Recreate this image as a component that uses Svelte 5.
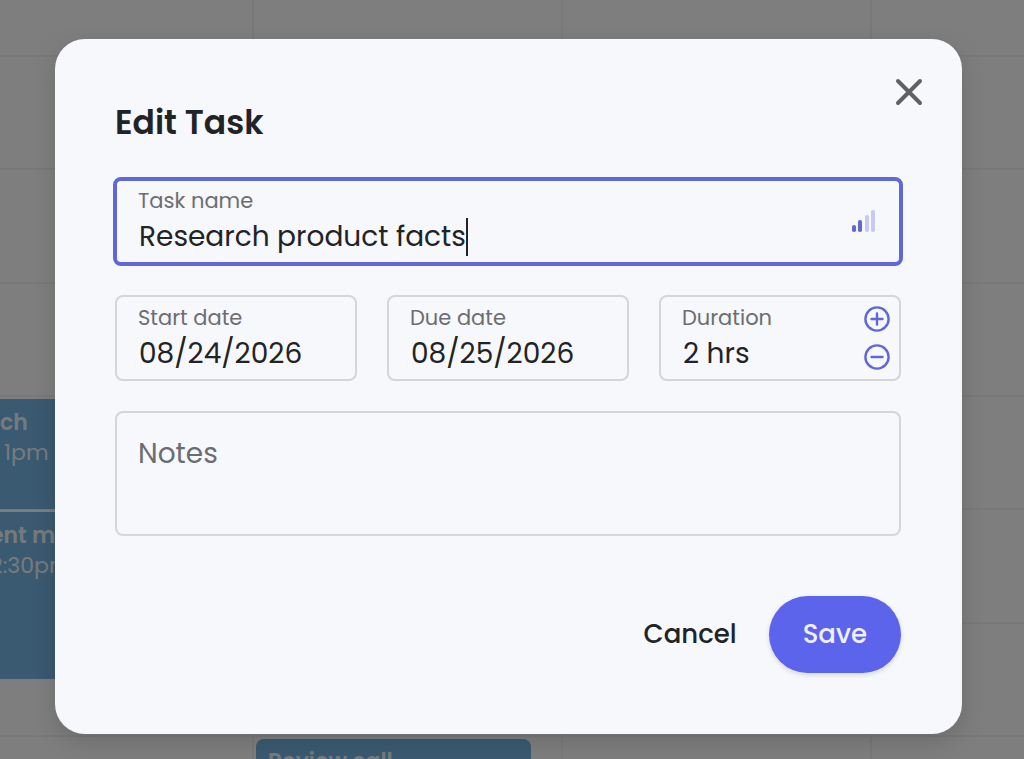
<script lang="ts">
  let taskName = $state('Research product facts');
  let startDate = $state('08/24/2026');
  let dueDate = $state('08/25/2026');
  let hours = $state(2);
  let notes = $state('');

  const cells = Array.from({ length: 32 });
  const effort = [
    { x: 1, y: 17, height: 7, active: true },
    { x: 7, y: 12, height: 12, active: true },
    { x: 14, y: 7, height: 17, active: false },
    { x: 20, y: 2, height: 22, active: false }
  ];

  function changeHours(step: number) {
    hours = Math.max(1, hours + step);
  }
</script>

<div class="page">
  <div class="calendar" aria-hidden="true">
    <div class="cells">
      {#each cells as _}
        <div class="cell"></div>
      {/each}
    </div>
    <div class="events">
      <div class="event lunch">
        <strong>ch</strong>
        <span>1pm</span>
      </div>
      <div class="event meeting">
        <strong>ent meeting</strong>
        <span>2:30pm</span>
      </div>
      <div class="event call">
        <strong>Review call</strong>
      </div>
    </div>
  </div>

  <div class="backdrop">
    <form class="dialog" role="dialog" aria-labelledby="dialog-title" onsubmit={(e) => e.preventDefault()}>
      <header>
        <h1 id="dialog-title">Edit Task</h1>
        <button type="button" class="close" aria-label="Close">
          <svg viewBox="0 0 32 32" width="32" height="32">
            <path d="M5 5 27 27M27 5 5 27" />
          </svg>
        </button>
      </header>

      <div class="field active">
        <div class="text">
          <label for="task-name">Task name</label>
          <div class="entry">
            <input id="task-name" class="name" bind:value={taskName} />
            <span class="caret"></span>
          </div>
        </div>
        <svg class="effort" viewBox="0 0 26 26" width="26" height="26">
          {#each effort as bar}
            <rect x={bar.x} y={bar.y} width="4" height={bar.height} rx="1.8" class:on={bar.active} />
          {/each}
        </svg>
      </div>

      <div class="row">
        <div class="field">
          <div class="text">
            <label for="start-date">Start date</label>
            <input id="start-date" bind:value={startDate} />
          </div>
        </div>
        <div class="field">
          <div class="text">
            <label for="due-date">Due date</label>
            <input id="due-date" bind:value={dueDate} />
          </div>
        </div>
        <div class="field">
          <div class="text">
            <label for="duration">Duration</label>
            <input id="duration" value="{hours} hrs" readonly />
          </div>
          <div class="stepper">
            <button type="button" aria-label="Increase duration" onclick={() => changeHours(1)}>
              <svg viewBox="0 0 26 26" width="26" height="26">
                <circle cx="13" cy="13" r="11.6" />
                <path d="M7.5 13h11M13 7.5v11" />
              </svg>
            </button>
            <button type="button" aria-label="Decrease duration" onclick={() => changeHours(-1)}>
              <svg viewBox="0 0 26 26" width="26" height="26">
                <circle cx="13" cy="13" r="11.6" />
                <path d="M7.5 13h11" />
              </svg>
            </button>
          </div>
        </div>
      </div>

      <textarea aria-label="Notes" placeholder="Notes" bind:value={notes}></textarea>

      <footer>
        <button type="button" class="cancel">Cancel</button>
        <button type="submit" class="save">Save</button>
      </footer>
    </form>
  </div>
</div>

<style>
  :global(body) {
    margin: 0;
  }

  .page {
    position: relative;
    min-height: 100vh;
    display: grid;
    overflow: hidden;
    font-family: Poppins, Inter, sans-serif;
    color: #222326;
  }

  .page * {
    box-sizing: border-box;
  }

  .calendar {
    position: absolute;
    inset: 0;
    background: #fdfdfd;
  }

  .cells,
  .events {
    position: absolute;
    inset: 0;
    display: grid;
    grid-template-columns: 254px 1fr 1fr 152px;
    grid-template-rows: 57px repeat(6, 1fr) 22px;
  }

  .cell {
    border-right: 2px solid #f0f0f0;
    border-bottom: 2px solid #f0f0f0;
  }

  .cell:nth-child(4n) {
    border-right: 0;
  }

  .cell:nth-last-child(-n + 4) {
    border-bottom: 0;
  }

  .event {
    display: flex;
    flex-direction: column;
    overflow: hidden;
    background: #74b4e2;
    color: rgba(255, 255, 255, 0.9);
    font-size: 22px;
    line-height: 30px;
    white-space: nowrap;
  }

  .event strong {
    font-weight: 600;
  }

  .lunch {
    grid-area: 5 / 1;
    margin: 2px 32px 1px 0;
    padding-top: 9px;
  }

  .lunch span {
    padding-left: 4px;
  }

  .meeting {
    grid-area: 6 / 1 / span 2 / auto;
    margin: 2px 32px 58px -10px;
    padding-top: 9px;
  }

  .call {
    grid-area: 8 / 2;
    margin: 2px 32px 0 2px;
    padding: 8px 12px;
    border-radius: 8px 8px 0 0;
  }

  .backdrop {
    position: relative;
    padding: 39px 62px 25px 55px;
    background: rgba(0, 0, 0, 0.5);
  }

  .dialog {
    padding: 37px 61px 61px 60px;
    border-radius: 30px;
    background: #f6f8fc;
    box-shadow: 0 8px 24px rgba(0, 0, 0, 0.14);
  }

  header {
    display: flex;
    justify-content: space-between;
    align-items: flex-start;
    margin-bottom: 34px;
  }

  h1 {
    margin: 27px 0 0;
    font-size: 33px;
    line-height: 40px;
    font-weight: 600;
  }

  button,
  input,
  textarea {
    font: inherit;
    color: inherit;
    border: 0;
    background: none;
    outline: none;
  }

  button {
    padding: 0;
    cursor: pointer;
  }

  svg {
    display: block;
    fill: none;
    stroke-linecap: round;
  }

  .close {
    margin-right: -24px;
  }

  .close svg {
    stroke: #606164;
    stroke-width: 4;
  }

  .field {
    display: flex;
    align-items: center;
    justify-content: space-between;
    min-width: 0;
    height: 86px;
    padding: 0 9px 0 21px;
    border: 2px solid #d4d6da;
    border-radius: 8px;
  }

  .field.active {
    height: 89px;
    margin: 0 -2px;
    padding: 0 22px 2px 21px;
    border: 4px solid #6068d8;
  }

  .text {
    flex: 1;
    min-width: 0;
  }

  label {
    display: block;
    font-size: 21px;
    line-height: 32px;
    color: #6c6d71;
  }

  input {
    display: block;
    width: 100%;
    height: 40px;
    padding: 0 0 0 1px;
    font-size: 28px;
    line-height: 40px;
  }

  .entry {
    display: flex;
    align-items: center;
  }

  .name {
    width: auto;
    field-sizing: content;
  }

  .caret {
    width: 2px;
    height: 38px;
    background: #222326;
  }

  .effort rect {
    fill: #c9c8f1;
  }

  .effort rect.on {
    fill: #6068d8;
  }

  .row {
    display: grid;
    grid-template-columns: repeat(3, 1fr);
    gap: 30px;
    margin: 29px 0 30px;
  }

  .stepper {
    display: grid;
    gap: 12px;
  }

  .stepper svg {
    stroke: #6068d8;
    stroke-width: 2.4;
  }

  textarea {
    display: block;
    width: 100%;
    height: 125px;
    padding: 22px 21px;
    border: 2px solid #d4d6da;
    border-radius: 8px;
    font-size: 28px;
    line-height: 38px;
    resize: none;
  }

  textarea::placeholder {
    color: #6c6d71;
    opacity: 1;
  }

  footer {
    display: flex;
    justify-content: flex-end;
    align-items: center;
    gap: 32px;
    margin-top: 60px;
    font-size: 26px;
    line-height: 37px;
    font-weight: 500;
  }

  .save {
    padding: 20px 34px;
    border-radius: 39px;
    background: #5b64ea;
    color: #eef0ff;
    box-shadow: 0 2px 5px rgba(0, 0, 0, 0.14);
  }
</style>
